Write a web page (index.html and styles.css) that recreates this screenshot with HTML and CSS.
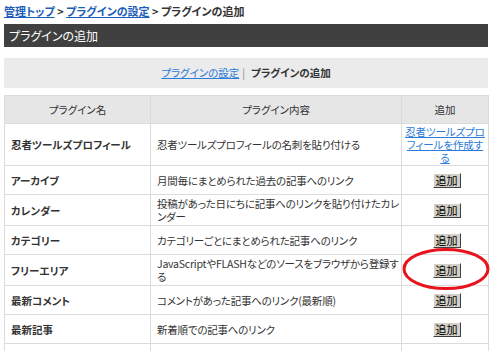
FILE: index.html
```html
<!DOCTYPE html>
<html lang="ja">
<head>
<meta charset="utf-8">
<link rel="stylesheet" href="styles.css">
</head>
<body>
<div class="page">
  <div class="crumbs"><a href="#">管理トップ</a> &gt; <a href="#">プラグインの設定</a> &gt; プラグインの追加</div>
  <h1 class="bar">プラグインの追加</h1>
  <div class="subnav"><a href="#">プラグインの設定</a><span class="sep">|</span><b>プラグインの追加</b></div>
  <table class="plugins">
    <colgroup><col class="c1"><col class="c2"><col class="c3"></colgroup>
    <thead>
      <tr><th>プラグイン名</th><th>プラグイン内容</th><th>追加</th></tr>
    </thead>
    <tbody>
      <tr><td class="name">忍者ツールズプロフィール</td><td class="desc">忍者ツールズプロフィールの名刺を貼り付ける</td><td class="act"><a href="#">忍者ツールズプロフィールを作成する</a></td></tr>
      <tr><td class="name">アーカイブ</td><td class="desc">月間毎にまとめられた過去の記事へのリンク</td><td class="act"><button class="add">追加</button></td></tr>
      <tr><td class="name">カレンダー</td><td class="desc">投稿があった日にちに記事へのリンクを貼り付けたカレンダー</td><td class="act"><button class="add">追加</button></td></tr>
      <tr><td class="name">カテゴリー</td><td class="desc">カテゴリーごとにまとめられた記事へのリンク</td><td class="act"><button class="add">追加</button></td></tr>
      <tr><td class="name">フリーエリア</td><td class="desc">JavaScriptやFLASHなどのソースをブラウザから登録する</td><td class="act mark-cell"><button class="add">追加</button><svg class="mark" width="90" height="44" viewBox="0 0 90 44"><ellipse cx="45" cy="22" rx="42" ry="19.5" fill="none" stroke="#e8141b" stroke-width="3"/></svg></td></tr>
      <tr><td class="name">最新コメント</td><td class="desc">コメントがあった記事へのリンク(最新順)</td><td class="act"><button class="add">追加</button></td></tr>
      <tr><td class="name">最新記事</td><td class="desc">新着順での記事へのリンク</td><td class="act"><button class="add">追加</button></td></tr>
      <tr><td class="name">&nbsp;</td><td class="desc">&nbsp;</td><td class="act"><button class="add">追加</button></td></tr>
    </tbody>
  </table>
</div>
</body>
</html>
```
FILE: styles.css
```css
html, body {
  margin: 0;
  padding: 0;
  background: #fff;
}
body {
  font-family: "Noto Sans CJK JP", "Noto Sans", sans-serif;
  font-feature-settings: "palt";
  font-size: 10.5px;
  color: #333;
}
.page {
  width: 484px;
  padding: 4px 0 0 4px;
}
.crumbs {
  font-size: 11px;
  font-weight: bold;
  line-height: 14px;
  height: 20px;
  color: #333;
}
.crumbs a {
  color: #1d5fb8;
}
.bar {
  margin: 0;
  background: #404040;
  color: #fff;
  font-size: 12px;
  font-weight: normal;
  height: 23px;
  line-height: 23px;
  padding-left: 5px;
}
.subnav {
  margin-top: 11px;
  background: #ebebeb;
  height: 30px;
  line-height: 30px;
  text-align: center;
  font-size: 10.5px;
}
.subnav a {
  color: #2b7bd8;
}
.subnav .sep {
  color: #888;
  margin: 0 6px 0 3px;
}
.subnav b {
  color: #333;
}
.plugins {
  margin-top: 7px;
  width: 484px;
  border-collapse: collapse;
  table-layout: fixed;
}
.c1 { width: 146px; }
.c2 { width: 251px; }
.c3 { width: 87px; }
.plugins th, .plugins td {
  border: 1px solid #dcdcdc;
  line-height: 13px;
  padding: 2px 1px 2px 6px;
}
.plugins th {
  background: #e6e6e6;
  font-weight: normal;
  height: 23px;
  color: #333;
  padding: 2px 4px;
}
.plugins td {
  height: 24px;
  vertical-align: middle;
}
.plugins td.desc {
  letter-spacing: -0.22px;
}
.plugins td.name {
  font-weight: bold;
  padding-left: 6px;
}
.plugins td.act {
  text-align: center;
  padding: 1px 3px;
}
.plugins td.act a {
  color: #2b7bd8;
  letter-spacing: -0.1px;
}
.add {
  font-family: "Noto Sans CJK JP", sans-serif;
  font-size: 11px;
  line-height: 11px;
  padding: 1px 2px;
  background: #d4d0c8;
  border: 1px solid;
  border-color: #fff #404040 #404040 #fff;
  color: #000;
  margin-left: 3px;
}
.mark-cell {
  position: relative;
}
.mark {
  position: absolute;
  left: -1px;
  top: -9px;
  height: 46px;
}
```
